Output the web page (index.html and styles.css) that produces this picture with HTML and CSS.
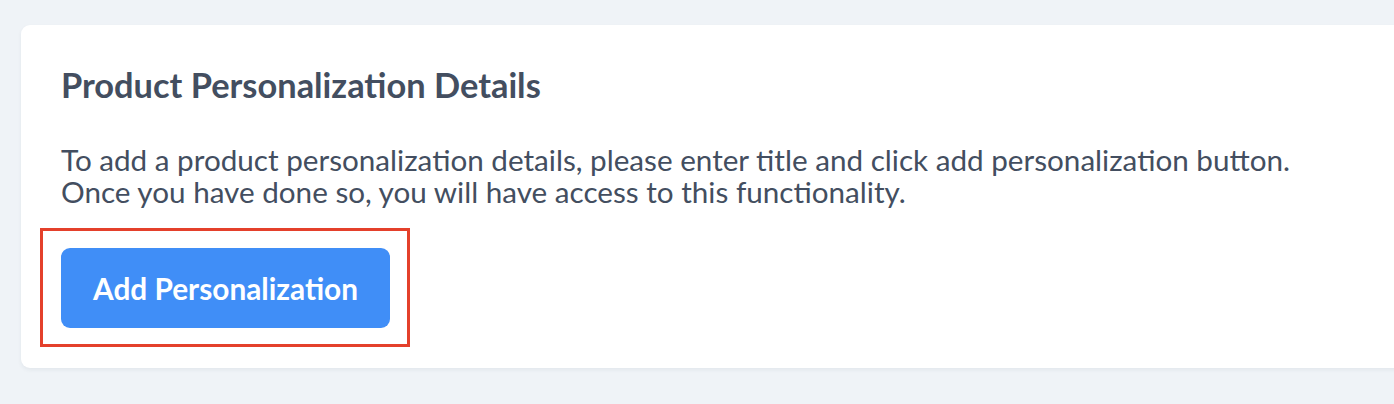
FILE: index.html
```html
<!DOCTYPE html>
<html lang="en">
<head>
    <meta charset="UTF-8">
    <meta name="viewport" content="width=device-width, initial-scale=1.0">
    <title>Product Personalization</title>
    <link rel="stylesheet" href="styles.css">
</head>
<body>
    <div class="page">
        <div class="card">
            <h2 class="card-title">Product Personalization Details</h2>
            <p class="card-text">
                To add a product personalization details, please enter title and click add personalization button.<br>
                Once you have done so, you will have access to this functionality.
            </p>
            <button class="btn btn-primary highlighted">Add Personalization</button>
        </div>
    </div>
</body>
</html>
```

FILE: styles.css
```css
:root {
    --bg: #eff3f7;
    --text: #434e60;
    --primary: #408ef7;
    --highlight: #e4402b;
}

html, body {
    margin: 0;
    height: 100%;
}

body {
    font-family: Lato, "Open Sans", sans-serif;
    background: var(--bg);
    color: var(--text);
    overflow: hidden;
}

.page {
    padding: 25px 0 0 21px;
}

.card {
    box-sizing: border-box;
    background: #fff;
    border-radius: 9px;
    box-shadow: 0 2px 4px rgba(30, 45, 70, 0.06);
    margin-right: -30px;
    padding: 40px 40px 0;
    height: 343px;
}

.card-title {
    margin: 0 0 39px;
    font-size: 34.4px;
    font-weight: 700;
    line-height: 40px;
}

.card-text {
    margin: 0 0 40px;
    font-size: 29.65px;
    line-height: 32px;
}

.btn {
    font-family: inherit;
    border: none;
    cursor: pointer;
}

.btn-primary {
    background: var(--primary);
    color: #fff;
    width: 329px;
    height: 80px;
    border-radius: 9px;
    font-size: 29.8px;
    font-weight: 700;
    padding: 0;
}

/* annotation frame drawn around the button */
.highlighted {
    position: relative;
}

.highlighted::after {
    content: '';
    position: absolute;
    top: -20px;
    left: -21px;
    right: -20px;
    bottom: -19px;
    border: 3px solid var(--highlight);
    pointer-events: none;
}
```
